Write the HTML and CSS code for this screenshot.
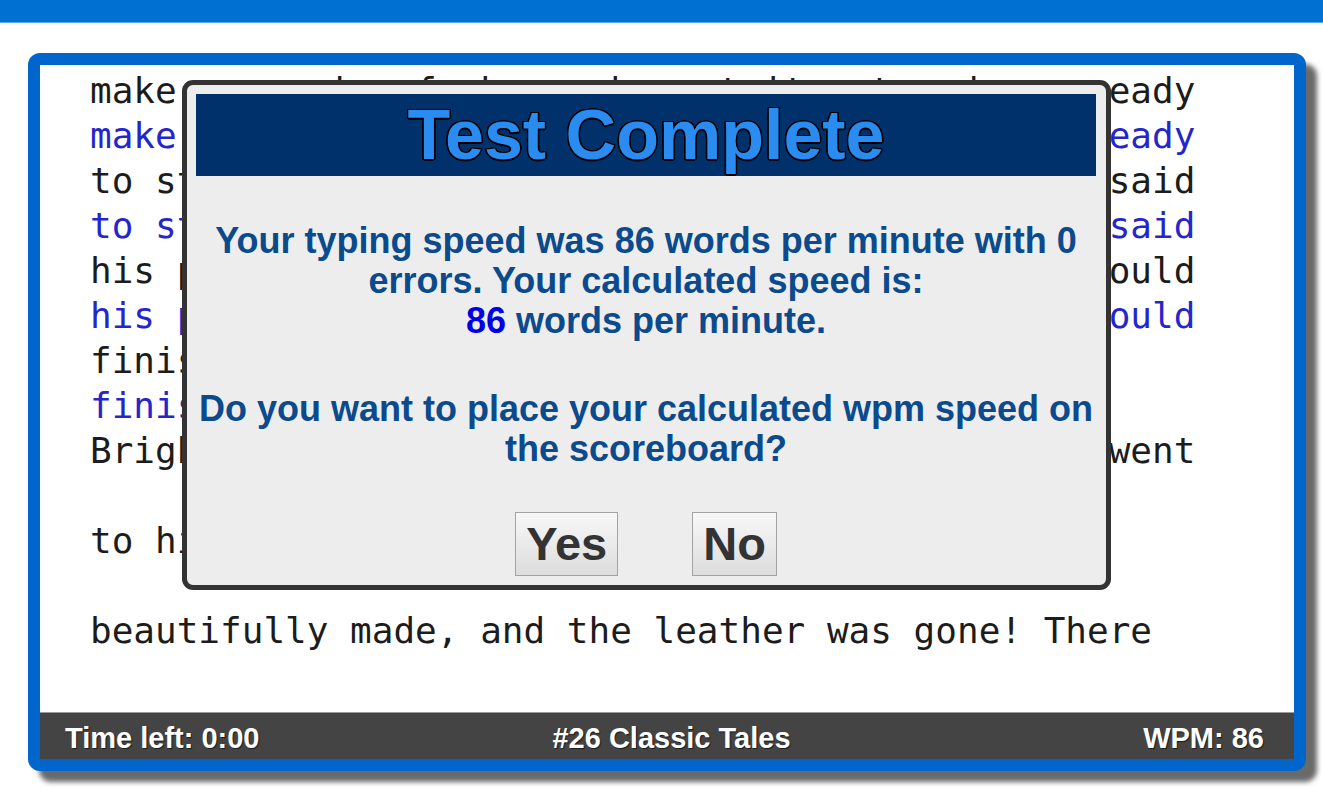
FILE: index.html
```html
<!DOCTYPE html>
<html lang="en">
<head>
<meta charset="utf-8">
<title>Typing Test</title>
<link rel="stylesheet" href="styles.css">
</head>
<body>
<div class="topbar"></div>
<div class="card">
  <div class="typing">
<pre class="text"><span class="orig">make one pair of shoes; he cut it out and was ready</span>
<span class="typed">make one pair of shoes; he cut it out and was ready</span>
<span class="orig">to stitch up in the morning. "I'll finish," he said</span>
<span class="typed">to stitch up in the morning. "I'll finish," he said</span>
<span class="orig">his prayers and went to bed, thinking that he would</span>
<span class="typed">his prayers and went to bed, thinking that he would</span>
<span class="orig">finish them in the morning.</span>
<span class="typed">finish them in the morning.</span>
<span class="orig">Bright and early the next morning, the cobbler went</span>

<span class="orig">to his work-bench and found the shoes finished,</span>

<span class="orig">beautifully made, and the leather was gone! There</span></pre>
  </div>
  <div class="status">
    <span class="st-left">Time left: 0:00</span>
    <span class="st-mid">#26 Classic Tales</span>
    <span class="st-right">WPM: 86</span>
  </div>
  <div class="modal">
    <div class="modal-head"><h1 class="modal-title">Test Complete</h1></div>
    <p class="modal-msg">Your typing speed was 86 words per minute with 0 errors. Your calculated speed is:<br><span class="hl">86</span> words per minute.</p>
    <p class="modal-msg modal-ask">Do you want to place your calculated wpm speed on the scoreboard?</p>
    <div class="modal-actions">
      <button class="btn">Yes</button>
      <button class="btn">No</button>
    </div>
  </div>
</div>
</body>
</html>
```

FILE: styles.css
```css
html, body {
  margin: 0;
  padding: 0;
  background: #ffffff;
}

body {
  width: 1323px;
  height: 788px;
  overflow: hidden;
  font-family: "Liberation Sans", Arial, sans-serif;
}

.topbar {
  height: 22px;
  background: #0071d3;
  border-bottom: 1px solid #5aa9f0;
}

.card {
  position: relative;
  box-sizing: border-box;
  width: 1278px;
  height: 718px;
  margin: 30px 0 0 28px;
  border: 12px solid #0066cc;
  border-radius: 12px;
  background: #ffffff;
  box-shadow: 11px 11px 5px rgba(80, 80, 80, 0.85);
  display: flex;
  flex-direction: column;
}

.typing {
  flex: 1;
  overflow: hidden;
  border-radius: 2px 2px 0 0;
}

.text {
  margin: 0;
  padding: 3px 0 0 50px;
  font-family: "DejaVu Sans Mono", "Liberation Mono", monospace;
  font-size: 36px;
  line-height: 45px;
  white-space: pre;
  color: #1a1a1a;
}

.orig {
  color: #1c1c1c;
}

.typed {
  color: #2525cc;
}

.status {
  height: 47px;
  box-sizing: border-box;
  border-top: 1px solid #9a9a9a;
  background: #444444;
  color: #ffffff;
  font-weight: bold;
  font-size: 29px;
  line-height: 44px;
  padding: 3px 30px 0 25px;
  display: grid;
  grid-template-columns: 1fr 1fr 1fr;
  text-shadow: 1px 1px 1px rgba(0, 0, 0, 0.6);
}

.st-left {
  text-align: left;
}

.st-mid {
  text-align: center;
  padding-left: 14px;
}

.st-right {
  text-align: right;
}

.modal {
  position: absolute;
  left: 142px;
  top: 15px;
  box-sizing: border-box;
  width: 929px;
  height: 510px;
  border: 5px solid #333333;
  border-radius: 11px;
  background: #ededed;
  padding: 9px 10px 0 9px;
  text-align: center;
}

.modal-head {
  height: 82px;
  background: #00316b;
}

.modal-title {
  margin: 0;
  font-size: 70px;
  line-height: 82px;
  font-weight: bold;
  color: #2a8cf0;
  text-shadow:
    1.5px 0 0 #000, -1.5px 0 0 #000, 0 1.5px 0 #000, 0 -1.5px 0 #000,
    1.2px 1.2px 0 #000, -1.2px 1.2px 0 #000, 1.2px -1.2px 0 #000, -1.2px -1.2px 0 #000;
}

.modal-msg {
  margin: 45px 0 0 0;
  font-size: 36px;
  line-height: 40px;
  font-weight: bold;
  color: #0b4a8c;
}

.modal-ask {
  margin-top: 48px;
}

.hl {
  color: #0000e6;
}

.modal-actions {
  margin-top: 43px;
  display: flex;
  justify-content: center;
  gap: 74px;
}

.btn {
  font-family: "Liberation Sans", Arial, sans-serif;
  font-size: 47px;
  font-weight: bold;
  line-height: 62px;
  height: 64px;
  padding: 0 10px;
  color: #333333;
  border: 1px solid #a3a3a3;
  border-radius: 0;
  background: linear-gradient(#f8f8f8, #dcdcdc);
}
```
